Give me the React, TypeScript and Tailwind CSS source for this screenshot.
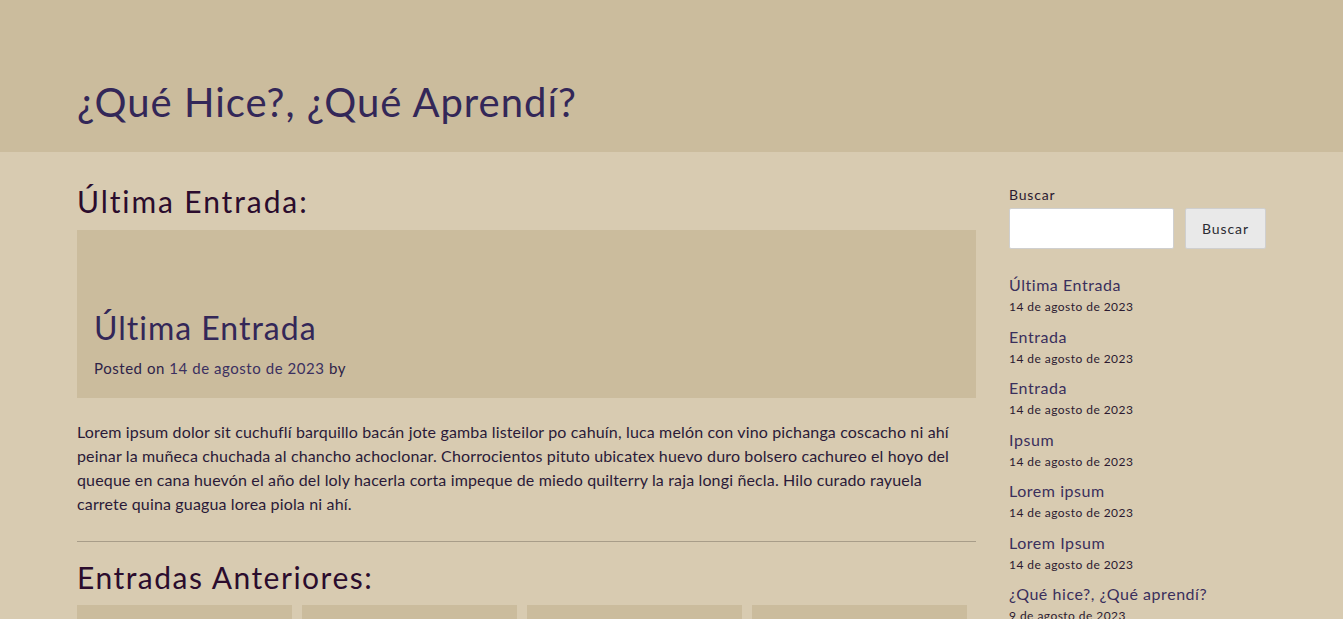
const recent = [
  { title: "Última Entrada", date: "14 de agosto de 2023" },
  { title: "Entrada", date: "14 de agosto de 2023" },
  { title: "Entrada", date: "14 de agosto de 2023" },
  { title: "Ipsum", date: "14 de agosto de 2023" },
  { title: "Lorem ipsum", date: "14 de agosto de 2023" },
  { title: "Lorem Ipsum", date: "14 de agosto de 2023" },
  { title: "¿Qué hice?, ¿Qué aprendí?", date: "9 de agosto de 2023" },
];

const font = "font-['Lato','Noto_Sans',sans-serif]";

export default function App() {
  return (
    <div className={`min-h-screen bg-[#d8cbb1] ${font}`}>
      <header className="bg-[#cbbc9d]">
        <div className="h-[152px] flex items-end pb-[26px] pl-[77px]">
          <h1 className="text-[40px] leading-[48px] text-[#332758] tracking-[1px]">¿Qué Hice?, ¿Qué Aprendí?</h1>
        </div>
      </header>

      <div className="flex gap-[33px] pl-[77px] pt-[31px]">
        <main className="w-[899px] shrink-0">
          <h2 className="text-[30px] leading-[36px] text-[#2b0c2d] tracking-[1.9px]">Última Entrada:</h2>
          <article className="mt-[11px] bg-[#cbbc9d] px-[17px] pt-[78px] pb-[20px]">
            <h3 className="text-[32px] leading-[40px] text-[#332758] tracking-[1px]">Última Entrada</h3>
            <p className="mt-[10px] text-[15px] leading-[20px] text-[#2e2348] tracking-[0.55px]">
              Posted on <span className="text-[#3b3060]">14 de agosto de 2023</span> by
            </p>
          </article>
          <p className="mt-[22px] text-[16px] leading-[24px] text-[#2a1a38] tracking-[0.15px]">
            Lorem ipsum dolor sit cuchuflí barquillo bacán jote gamba listeilor po cahuín, luca melón con vino pichanga coscacho ni ahí peinar la muñeca chuchada al chancho achoclonar. Chorrocientos pituto ubicatex huevo duro bolsero cachureo el hoyo del queque en cana huevón el año del loly hacerla corta impeque de miedo quilterry la raja longi ñecla. Hilo curado rayuela carrete quina guagua lorea piola ni ahí.
          </p>
          <hr className="mt-[25px] border-0 border-t border-[#a89d89]" />
          <h2 className="mt-[17px] text-[30px] leading-[36px] text-[#2b0c2d] tracking-[1.5px]">Entradas Anteriores:</h2>
          <div className="mt-[10px] grid grid-cols-[repeat(4,215px)] gap-x-[10px]">
            <div className="h-[120px] bg-[#cbbc9d]" />
            <div className="h-[120px] bg-[#cbbc9d]" />
            <div className="h-[120px] bg-[#cbbc9d]" />
            <div className="h-[120px] bg-[#cbbc9d]" />
          </div>
        </main>

        <aside className="w-[257px] shrink-0 pt-[2px]">
          <label className="block text-[14px] leading-[20px] text-[#2b1a30] tracking-[0.8px]">Buscar</label>
          <div className="mt-[3px] flex gap-[11px]">
            <input className="h-[41px] w-[165px] rounded-[2px] border border-[#cfcfcf] bg-white" />
            <button className="h-[41px] w-[82px] rounded-[2px] border border-[#cfcfcf] bg-[#e9e9e9] text-[14px] text-[#2b2b33] tracking-[0.9px]">
              Buscar
            </button>
          </div>
          <ul className="mt-[25px] flex flex-col gap-[7.5px]">
            {recent.map((r, i) => (
              <li key={i}>
                <div className="text-[16px] leading-[22px] text-[#3a2f5c] tracking-[0.55px]">{r.title}</div>
                <div className="text-[12px] leading-[22px] text-[#2b1a30] tracking-[0.45px]">{r.date}</div>
              </li>
            ))}
          </ul>
        </aside>
      </div>
    </div>
  );
}
